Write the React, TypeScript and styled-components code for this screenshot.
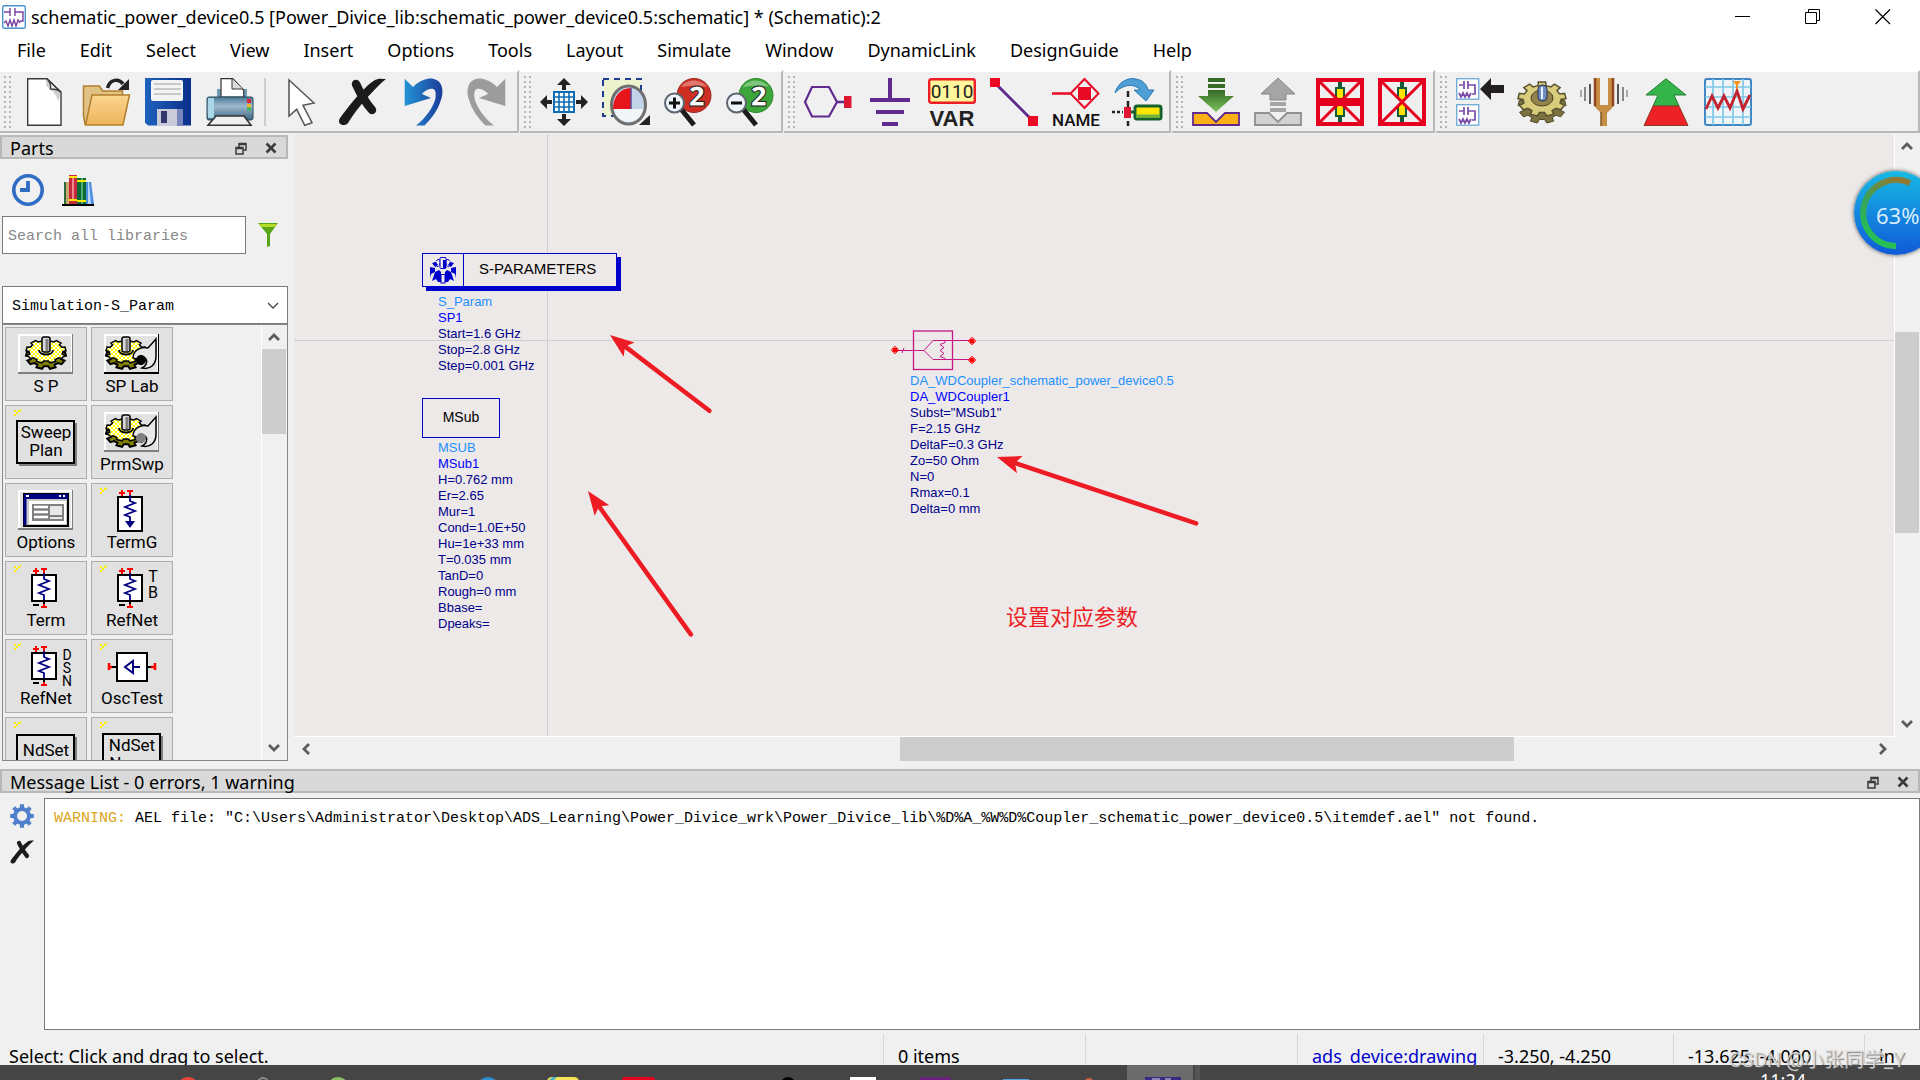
import React from "react";
import styled, { createGlobalStyle } from "styled-components";

const UI = '"Noto Sans", "Open Sans", sans-serif';
const MONO = '"Liberation Mono", monospace';
const ARIAL = '"Liberation Sans", Arial, sans-serif';

const Global = createGlobalStyle`
  * { box-sizing: border-box; }
  body { margin: 0; background: #f0f0f0; color: #000; font-family: ${UI}; font-size: 18px; }
  button { font: inherit; color: inherit; padding: 0; border: 0; background: none; }
  svg { display: block; flex: none; overflow: visible; }
`;

/* ---------- frame ---------- */
const Window = styled.div`
  position: relative;
  display: flex;
  flex-direction: column;
  height: 100vh;
  overflow: hidden;
`;
const TitleBar = styled.header`
  display: flex;
  align-items: center;
  height: 34px;
  padding: 0 2px;
  background: #fff;
`;
const Title = styled.h1`
  flex: 1;
  margin: 0 0 0 5px;
  font-size: 18px;
  font-weight: 400;
  line-height: 34px;
  white-space: nowrap;
`;
const WindowButton = styled.button`
  display: grid;
  place-items: center;
  width: 70px;
  height: 34px;
`;
const MenuBar = styled.nav`
  display: flex;
  height: 36px;
  background: #fff;
`;
const MenuItem = styled.button`
  padding: 0 17px;
  line-height: 32px;
  height: 32px;
`;

/* ---------- tool bars ---------- */
const ToolArea = styled.div`
  display: flex;
  gap: 1px;
  height: 63px;
`;
const ToolGroup = styled.div<{ $grow?: boolean }>`
  display: flex;
  align-items: center;
  flex: ${(p) => (p.$grow ? "1" : "none")};
  border-top: 2px solid #fff;
  border-right: 2px solid #b8b8b8;
  border-bottom: 2px solid #b8b8b8;
`;
const Grip = styled.span`
  width: 13px;
  height: 52px;
  background: radial-gradient(circle at 1px 1px, #b4b4b4 1px, transparent 1px) 4px 0 / 5px 5px;
  background-clip: content-box;
  padding: 0 1px 0 3px;
`;
const ToolButton = styled.button`
  display: grid;
  place-items: center;
  width: 62px;
  height: 56px;
`;
const ToolRule = styled.span`
  width: 2px;
  height: 48px;
  margin: 0 3px;
  background: #cfcfcf;
`;

/* ---------- work area ---------- */
const Work = styled.main`
  display: flex;
  flex: 1;
  min-height: 0;
`;
const Side = styled.aside`
  display: flex;
  flex-direction: column;
  width: 294px;
  padding: 2px 6px 0 0;
`;
const DockTitle = styled.div`
  display: flex;
  align-items: center;
  height: 24px;
  padding: 2px 8px 0;
  border: 2px solid #b8b8b8;
  background: #d9d9d9;
`;
const DockName = styled.h2`
  flex: 1;
  margin: 0;
  font-size: 18px;
  font-weight: 400;
  line-height: 24px;
  white-space: nowrap;
`;
const DockButton = styled.button`
  display: grid;
  place-items: center;
  width: 31px;
  height: 18px;
  &:last-child { width: 14px; margin-left: 8px; }
`;
const SideTools = styled.div`
  display: flex;
  gap: 18px;
  padding: 15px 12px 10px;
`;
const SearchRow = styled.div`
  display: flex;
  align-items: center;
  gap: 12px;
  padding-left: 2px;
  margin-bottom: 32px;
`;
const SearchBox = styled.input`
  width: 244px;
  height: 38px;
  padding: 2px 5px 0;
  border: 1px solid #7a7a7a;
  background: #fff;
  font: 15px ${MONO};
  outline: 0;
  &::placeholder { color: #878787; opacity: 1; }
`;
const ComboWrap = styled.div`
  position: relative;
  margin-left: 2px;
  svg { position: absolute; right: 9px; top: 16px; pointer-events: none; }
`;
const Combo = styled.select`
  appearance: none;
  display: block;
  width: 100%;
  height: 38px;
  padding: 2px 9px 0;
  border: 1px solid #7a7a7a;
  border-radius: 0;
  background: #fff;
  color: #000;
  font: 15px ${MONO};
`;
const Palette = styled.div`
  display: flex;
  flex: 1;
  min-height: 0;
  margin: 0 0 8px 2px;
  border: 1px solid #828790;
`;
const Tiles = styled.div`
  flex: 1;
  display: grid;
  grid-template-columns: 82px 82px;
  grid-auto-rows: 74px;
  gap: 4px;
  padding: 2px;
  overflow: hidden;
`;
const Tile = styled.button`
  display: flex;
  flex-direction: column;
  align-items: center;
  padding-top: 3px;
  border: 1px solid #adadad;
  background: #e1e1e1;
`;
const TileLabel = styled.span`
  font-family: Roboto, sans-serif;
  font-size: 17px;
  line-height: 18px;
`;
const VScroll = styled.div`
  display: flex;
  flex-direction: column;
  width: 26px;
  border-left: 1px solid #fff;
  background: #f0f0f0;
`;
const HScroll = styled.div`
  display: flex;
  height: 26px;
  border-top: 1px solid #fff;
  margin-right: 25px;
`;
const ScrollButton = styled.button`
  display: grid;
  place-items: center;
  flex: none;
  width: 24px;
  height: 24px;
`;
const Gutter = styled.div<{ $size: number }>`
  flex: ${(p) => p.$size};
`;
const Thumb = styled.div<{ $size: number }>`
  flex: ${(p) => p.$size};
  margin: 0 1px 1px 0;
  background: #cdcdcd;
`;
const View = styled.section`
  display: flex;
  flex: 1;
  flex-direction: column;
  min-width: 0;
  padding: 1px 0 7px;
`;
const ViewRow = styled.div`
  display: flex;
  flex: 1;
  min-height: 0;
`;
const Canvas = styled.div`
  position: relative;
  flex: 1;
  overflow: hidden;
  background:
    linear-gradient(#cccfce, #cccfce) 253px 0 / 1px 100% no-repeat,
    linear-gradient(#cccfce, #cccfce) 0 206px / 100% 1px no-repeat,
    #ede9e8;
`;
const Placed = styled.div<{ $x: number; $y: number }>`
  position: absolute;
  left: ${(p) => p.$x}px;
  top: ${(p) => p.$y}px;
`;
const Controller = styled.div`
  display: flex;
  width: 195px;
  height: 34px;
  border: 1px solid #0000cd;
  box-shadow: 4px 4px 0 #0000cd;
  background: #ede9e8;
  font: 15px/30px ${ARIAL};
`;
const ControllerIcon = styled.span`
  display: grid;
  place-items: center;
  width: 41px;
  border-right: 1px solid #0000cd;
`;
const ControllerName = styled.span`
  padding-left: 15px;
`;
const Substrate = styled.div`
  width: 78px;
  height: 40px;
  border: 1px solid #0000cd;
  font: 14px/36px ${ARIAL};
  text-align: center;
`;
const Params = styled.ul`
  margin: 0;
  padding: 0;
  list-style: none;
  font: 13px/16px ${ARIAL};
  color: #00008b;
  white-space: nowrap;
`;
const Param = styled.li<{ $tone?: string }>`
  color: ${(p) => p.$tone ?? "inherit"};
`;
const Remark = styled.p`
  margin: 0;
  color: #ed1c24;
  font: 22px/32px "Open Sans", "Noto Sans CJK SC", sans-serif;
  white-space: nowrap;
`;
const Marks = styled.svg`
  position: absolute;
  left: 0;
  top: 0;
  pointer-events: none;
`;

/* ---------- messages and status ---------- */
const Messages = styled.section`
  display: flex;
  flex-direction: column;
`;
const MessageRow = styled.div`
  display: flex;
  padding-top: 5px;
`;
const MessageTools = styled.div`
  display: flex;
  flex-direction: column;
  gap: 12px;
  width: 44px;
  padding: 6px 10px;
`;
const Log = styled.div`
  flex: 1;
  height: 232px;
  padding: 10px 9px;
  border: 1px solid #7a7a7a;
  background: #fff;
  font: 15px/20px ${MONO};
  white-space: pre;
`;
const Warn = styled.span`
  color: #daa520;
`;
const StatusBar = styled.footer`
  display: flex;
  align-items: flex-start;
  height: 35px;
  padding-top: 4px;
  overflow: hidden;
`;
const Cell = styled.span<{ $w?: number; $tone?: string }>`
  flex: ${(p) => (p.$w ? `0 0 ${p.$w}px` : "1")};
  height: 30px;
  padding: 9px 0 0 14px;
  line-height: 26px;
  color: ${(p) => p.$tone ?? "#000"};
  border-left: 1px solid #d7d7d7;
  white-space: nowrap;
  &:first-child { border: 0; padding-left: 9px; }
`;
const TaskBar = styled.div`
  position: relative;
  height: 15px;
  background: #454545;
  overflow: hidden;
`;
const Clock = styled.time`
  position: absolute;
  right: 114px;
  top: 5px;
  color: #fff;
  font-size: 18px;
  line-height: 20px;
`;
const Watermark = styled.span`
  position: absolute;
  right: 15px;
  bottom: 7px;
  color: rgba(225, 225, 225, 0.85);
  text-shadow: 1px 1px 1px rgba(90, 90, 90, 0.75);
  font: 20px/26px Roboto, "Noto Sans CJK SC", sans-serif;
`;
const Meter = styled.div`
  position: absolute;
  right: -18px;
  top: 171px;
  width: 84px;
  height: 84px;
  padding-left: 22px;
  border-radius: 50%;
  background: linear-gradient(#18b9e4, #1059d8);
  box-shadow: 0 0 4px rgba(0, 0, 0, 0.7);
  color: #d7ecff;
  font-size: 22px;
  line-height: 88px;
  svg { position: absolute; inset: 0; }
`;

/* ---------- icons ---------- */
const gearPath = (cx: number, cy: number, ro: number, ri: number, teeth: number, sy = 1) => {
  const pts: string[] = [];
  for (let i = 0; i < teeth; i++) {
    [[-0.3, ri], [-0.22, ro], [0.22, ro], [0.3, ri]].forEach(([o, r]) => {
      const a = ((i + o) / teeth) * Math.PI * 2 - Math.PI / 2;
      pts.push(`${(cx + Math.cos(a) * r).toFixed(1)} ${(cy + Math.sin(a) * r * sy).toFixed(1)}`);
    });
  }
  return `M${pts.join("L")}Z`;
};

const Svg48 = ({ children }: { children: React.ReactNode }) => (
  <svg width="48" height="48" viewBox="0 0 48 48" fill="none" aria-hidden="true">{children}</svg>
);
const Swirl = ({ fill }: { fill: string }) => (
  <path fill={fill} d="M4.7.7 13 9C20 2 28 0 33 .7c9 1.3 11 11.3 8.5 19.500C38 33 30 42 24.500 47.500H16C26 40 34 28 35.500 20c1-8-1.500-10-5.500-9-4 1-6 2.500-8 5l9 4L4.700 28z" />
);
const Cross = () => (
  <>
    <path d="M2 40C9 31 25 9 37 2c4-2 8-1 11-1C37 10 19 30 10 45c-3 4-12 2-8-5z" fill="#1c1a1b" />
    <path d="M18 6c4 9 9 18 16 26" stroke="#1c1a1b" strokeWidth="8.500" strokeLinecap="round" />
  </>
);
const Disabled = ({ bar }: { bar?: boolean }) => (
  <>
    <rect x="2" y="2" width="44" height="44" fill="#efefef" stroke="#e6001f" strokeWidth="4" />
    <path d="M24 4v40" stroke="#155a38" strokeWidth="4" />
    <path d="M20 10h8v10l-4 4 4 4v10h-8V28l4-4-4-4z" fill="#ffe500" stroke="#155a38" strokeWidth="2" />
    <path d="M4 4l40 40M44 4L4 44" stroke="#e6001f" strokeWidth="3" />
    {bar && <path d="M2 24h44" stroke="#e6001f" strokeWidth="8" />}
  </>
);
const Lens = ({ ball, edge, minus }: { ball: string; edge: string; minus?: boolean }) => (
  <>
    <circle cx="30" cy="17.500" r="17" fill={ball} stroke={edge} />
    <path d="M17 9c5-8 19-9 26 0-8-2-17-2-26 0z" fill="#fff" opacity=".35" />
    <path d="M17 31L30 47" stroke="#1b1b1b" strokeWidth="5" />
    <circle cx="10.500" cy="25" r="9.500" fill="#eef4fa" stroke="#5d6670" strokeWidth="2" />
    <path d={minus ? "M5 25h11" : "M5 25h11M10.500 19.500v11"} stroke="#111" strokeWidth="3" />
    <text x="33" y="28" fontFamily="Open Sans" fontWeight="800" fontSize="28" fill="#fff" stroke="#222" strokeWidth="1" textAnchor="middle">2</text>
  </>
);
const MiniSchematic = ({ y }: { y: number }) => (
  <g transform={`translate(0 ${y})`}>
    <rect x=".7" y=".7" width="22" height="20.500" fill="#fff" stroke="#75aedb" strokeWidth="1.400" />
    <path d="M3 7h4M8 3v8M12 3v8M12 7h7v9h-3M3 15l2 4 2-4 2 4 2-4 2 4 2-4" stroke="#7a4aa8" strokeWidth="1.700" />
  </g>
);

const ICONS: Record<string, React.ReactNode> = {
  New: (
    <>
      <path d="M7.700.7H27L41 14v33.300H7.700z" fill="#fff" stroke="#3a3a3a" strokeWidth="1.400" />
      <path d="M26 1l15 14-3 9C37 17 33 13 26 8z" fill="#999" opacity=".45" />
      <path d="M27 .7c3 3 4 7 3.500 10.300 4 0 8 .5 10.500 3.500z" fill="#f2f2f2" stroke="#3a3a3a" strokeWidth="1.400" />
    </>
  ),
  Open: (
    <>
      <path d="M1.500 38V8h16l3 5h20v6L8 46H3z" fill="#e0c285" stroke="#b07f2d" strokeWidth="1.500" />
      <path d="M10 17h37.500L41 47H3.500z" fill="url(#folder)" stroke="#b07f2d" strokeWidth="1.500" />
      <path d="M25.500 10C28 1 37 0 41 6" stroke="#222" strokeWidth="3.500" />
      <path d="M47 1v11H36z" fill="#222" />
    </>
  ),
  Save: (
    <>
      <path d="M1 0h46v47.500H4l-3-3z" fill="url(#floppy)" />
      <rect x="7" y="2" width="32" height="21" rx="2" fill="#f3f3f3" />
      <path d="M10 6h27M10 11h27M10 16h27" stroke="#bbb" strokeWidth="1.300" />
      <path d="M13 31h26v17H13z" fill="#c9ccd8" />
      <path d="M17 33h6v12h-6z" fill="#34386f" />
      <path d="M33 31h6v17h-6z" fill="#7986bd" />
    </>
  ),
  Print: (
    <>
      <path d="M11 20v-9h30v9" fill="#6f9bb4" />
      <path d="M15 19V.7h11.700L37.700 12v7z" fill="#fff" stroke="#333" strokeWidth="1.200" />
      <path d="M26 1v10h11" stroke="#333" fill="#ddd" />
      <rect x="1" y="19" width="46" height="23" rx="2" fill="url(#printer)" stroke="#234a5d" />
      <rect x="2" y="20" width="6" height="20" fill="#a8d7e8" />
      <path d="M41 23h4" stroke="#e2213c" strokeWidth="4" />
      <path d="M41 27.500h4" stroke="#f0b429" strokeWidth="3" />
      <path d="M41 31h4" stroke="#3ab54a" strokeWidth="3" />
      <path d="M10 38h28l7 9.300H2z" fill="#eee" stroke="#333" strokeWidth="1.600" />
    </>
  ),
  Pointer: <path d="M13 2l25 23-11 2.300 9 17.400-7.300 2.600-8-16L13 38z" fill="#fff" stroke="#5a5a5a" strokeWidth="1.600" />,
  Delete: <Cross />,
  Undo: <Swirl fill="url(#undo)" />,
  Redo: <g transform="translate(48 0) scale(-1 1)"><Swirl fill="#9c9c9c" /></g>,
  Pan: (
    <>
      <rect x="14" y="14" width="20" height="20" fill="#fff" stroke="#0d6cb5" strokeWidth="2" />
      <path d="M19 14v20M24 14v20M29 14v20M14 19h20M14 24h20M14 29h20" stroke="#0d6cb5" strokeWidth="1.600" />
      <path d="M24 0l7 7H17zM24 48l7-7H17zM0 24l7-7v14zM48 24l-7-7v14z" fill="#222" />
      <path d="M24 6v6M24 42v-6M6 24h6M42 24h-6" stroke="#222" strokeWidth="4" />
    </>
  ),
  "Zoom area": (
    <>
      <rect x="1" y="1" width="38" height="37" fill="#eef3cf" stroke="#1f3b8f" strokeWidth="2" strokeDasharray="6 5" />
      <ellipse cx="26.500" cy="27" rx="17" ry="19" fill="#c3d4e8" stroke="#6f6f6f" strokeWidth="3" />
      <path d="M11 31C11 19 18 10 29 10v21z" fill="#e8141c" />
      <path d="M29 10v21" stroke="#5b4a9a" strokeWidth="1.500" />
      <path d="M12 31h29c-1 8-8 13-14.500 13S13 39 12 31z" fill="#f2f5f8" />
      <path d="M48 37v10H37z" fill="#222" />
    </>
  ),
  "Zoom in": <Lens ball="#cf2e22" edge="#9d2a22" />,
  "Zoom out": <Lens ball="#3da63a" edge="#2c8a2c" minus />,
  Port: (
    <>
      <path d="M8 9h17l8 15-8 14.500H8L1 24z" stroke="#612a8e" strokeWidth="2.200" />
      <path d="M33 24h8" stroke="#612a8e" strokeWidth="2.500" />
      <rect x="40" y="18" width="7.500" height="12" fill="#dd1733" />
    </>
  ),
  Ground: <path d="M24 0v22M4 22h40M10 34h28M16 46h16" stroke="#612a8e" strokeWidth="4" />,
  Variable: (
    <>
      <rect x="1.200" y="1.200" width="45.600" height="23.600" rx="2" fill="#fff79a" stroke="#ee1c25" strokeWidth="2.400" />
      <text x="24" y="20" fontFamily="Roboto" fontSize="19" fill="#222" textAnchor="middle">0110</text>
      <text x="24" y="47.500" fontFamily="Liberation Sans" fontWeight="700" fontSize="22" fill="#222" textAnchor="middle">VAR</text>
    </>
  ),
  Wire: (
    <>
      <path d="M5 5l38 38" stroke="#612a8e" strokeWidth="3" />
      <path d="M0 0h10v9H0zM38 38h10v10H38z" fill="#ea0a25" />
    </>
  ),
  "Wire name": (
    <>
      <path d="M0 15.500h18" stroke="#ea0a25" strokeWidth="2.500" />
      <path d="M32.500 1l14 14.500-14 14.500-14-14.500z" stroke="#ea0a25" strokeWidth="2" fill="#efefef" />
      <path d="M26 9h13v13H26z" fill="#ea0a25" />
      <text x="24" y="47.500" fontFamily="Roboto" fontWeight="500" fontSize="17" fill="#111" textAnchor="middle">NAME</text>
    </>
  ),
  "Break connections": (
    <>
      <path d="M1 15C4 4 14-1 22 1c7 1 11 6 12 11h6L32 23 20 12h6C22 6 10 5 1 15z" fill="#4d9fd6" stroke="#2c78b3" />
      <path d="M14 13v35" stroke="#222" strokeWidth="2.500" strokeDasharray="6 4" />
      <path d="M-2 34h11" stroke="#222" strokeWidth="2.500" strokeDasharray="3 2" />
      <rect x="10" y="29" width="7" height="11" fill="#dd1733" />
      <rect x="21" y="28" width="26" height="13" rx="2" fill="#ffe500" stroke="#15602f" strokeWidth="3" />
      <path d="M22 38h24" stroke="#6db33f" strokeWidth="3" />
      <path d="M17 34h4" stroke="#15602f" strokeWidth="3" />
    </>
  ),
  "Push into": (
    <>
      <path d="M16 0h17v4H16zM16 6h17v4H16z" fill="#336a24" />
      <path d="M16 12h17v6h9L24 34 6 18h10z" fill="url(#push)" />
      <path d="M1 35h14l9 9 9-9h14v12H1z" fill="#fbb016" stroke="#612a8e" strokeWidth="1.800" />
    </>
  ),
  "Pop out": (
    <>
      <path d="M24 0l17 16h-9v6H16v-6H7z" fill="#a5a5a5" stroke="#858585" />
      <path d="M16 24h16v4H16zM16 30h16v4H16z" fill="#a5a5a5" />
      <path d="M1 35h14l9 9 9-9h14v12H1z" fill="#d2d2d2" stroke="#909090" strokeWidth="1.800" />
    </>
  ),
  Deactivate: <Disabled bar />,
  "Deactivate and short": <Disabled />,
  "Copy schematic": (
    <>
      <MiniSchematic y={0} />
      <MiniSchematic y={26} />
      <path d="M24 11L35 0v7h13v8H35v7z" fill="#231f20" />
    </>
  ),
  Simulate: (
    <>
      <path d={gearPath(24, 28, 24, 19, 9, 0.72)} fill="#7d7340" stroke="#4c4728" />
      <path d={gearPath(24, 21, 24, 19, 9, 0.72)} fill="#d9cc7c" stroke="#5a5330" strokeWidth="1.500" />
      <ellipse cx="24" cy="20" rx="11" ry="8" fill="#93834a" stroke="#4c4728" />
      <rect x="20" y="7" width="9" height="16" rx="4" fill="#6f8dc0" stroke="#2b344c" />
      <path d="M24 9v12" stroke="#e9f0ff" strokeWidth="2" />
    </>
  ),
  Tune: (
    <>
      <path d="M14 0h6v27h8V0h6v28l-7 7v13h-6V35l-7-7z" fill="#c58d45" />
      <path d="M15 0v28M33 0v28" stroke="#93441c" strokeWidth="2.500" />
      <path d="M21 34v14" stroke="#7c5a20" strokeWidth="1.500" />
      <path d="M10 6v20M38 6v20" stroke="#555" strokeWidth="2" />
      <path d="M5 9v14M43 9v14" stroke="#888" strokeWidth="2" />
      <path d="M1 12v7M47 12v7" stroke="#aaa" strokeWidth="2" />
    </>
  ),
  Optimize: (
    <>
      <path d="M24 .7L44 17H32l5 11H11l5-11H4z" fill="#35b44a" stroke="#257d35" />
      <path d="M11 28h26l9 19.500H2z" fill="#ec2227" stroke="#8e3a22" />
    </>
  ),
  "Data display": (
    <>
      <rect x="1" y="1" width="46" height="46" rx="2" fill="#eef4f8" stroke="#3f86c2" strokeWidth="2" />
      <path d="M9 1v46M19 1v46M29 1v46M39 1v46M1 9h46M1 19h46M1 29h46M1 39h46" stroke="#7cc6e6" strokeWidth="1.600" />
      <path d="M2 31l6-13 6 12 6-12 6 12 7-17 6 18 7-14" stroke="#c3232e" strokeWidth="2.800" />
      <path d="M29 3h8l-3 4v4h-2V7z" fill="#f7941d" />
    </>
  ),
};

const Defs = () => (
  <svg width="0" height="0" style={{ position: "absolute" }} aria-hidden="true">
    <defs>
      <linearGradient id="folder" x2="0" y2="1"><stop stopColor="#f9d690" /><stop offset="1" stopColor="#efb35b" /></linearGradient>
      <linearGradient id="floppy"><stop stopColor="#1d62bd" /><stop offset="1" stopColor="#0b2f8a" /></linearGradient>
      <linearGradient id="printer" x2="0" y2="1"><stop stopColor="#4d7896" /><stop offset=".4" stopColor="#9db8cc" /><stop offset="1" stopColor="#3c6684" /></linearGradient>
      <linearGradient id="undo"><stop stopColor="#2394d6" /><stop offset="1" stopColor="#1b3c9a" /></linearGradient>
      <linearGradient id="push" x2="0" y2="1"><stop stopColor="#336a24" /><stop offset="1" stopColor="#7cc35c" /></linearGradient>
      <linearGradient id="meter" x1=".7" x2=".3" y2="1"><stop stopColor="#8e7a33" /><stop offset=".5" stopColor="#35a65a" /><stop offset="1" stopColor="#24c454" /></linearGradient>
      <pattern id="dither" width="4" height="4" patternUnits="userSpaceOnUse">
        <path d="M0 0h4v4H0z" fill="#ffff00" />
        <path d="M0 0h2v2H0zM2 2h2v2H2z" fill="#fff" />
      </pattern>
    </defs>
  </svg>
);

const Chevron = ({ dir }: { dir: "up" | "down" | "left" | "right" }) => {
  const turn = { up: 0, right: 90, down: 180, left: 270 }[dir];
  return (
    <svg width="12" height="12" viewBox="0 0 12 12" aria-hidden="true">
      <path d="M1 9l5-5 5 5" fill="none" stroke="#5c5c5c" strokeWidth="2.800" transform={`rotate(${turn} 6 6)`} />
    </svg>
  );
};
const FloatIcon = () => (
  <svg width="12" height="13" viewBox="0 0 12 13" fill="none" stroke="#3a3a3a" strokeWidth="1.500" aria-hidden="true">
    <path d="M4 5V1.500h7V8H8.500M4 2.500h7" />
    <path d="M1 5.500h7v6.500H1zM1 6.500h7" />
  </svg>
);
const CloseIcon = () => (
  <svg width="12" height="12" viewBox="0 0 12 12" aria-hidden="true">
    <path d="M1.500 1.500l9 9M10.500 1.500l-9 9" stroke="#3a3a3a" strokeWidth="2.600" />
  </svg>
);

/* ---------- palette symbols ---------- */
const Spark = () => (
  <path d="M5 1h2v2H5zM9 1h2v2H9zM7 3h2v2H7zM5 5h2v2H5zM11 0h1v2h-1z" fill="#ffee00" />
);
const Bevel = ({ edge = "#808080" }: { edge?: string }) => (
  <>
    <path d="M9 3h55v40H9z" fill={edge} />
    <path d="M9 3h54v38H9z" fill="#fff" />
    <path d="M11 5h51v36H11z" fill="#e1e1e1" />
  </>
);
const GearTile = ({ wrench, hook = "#000" }: { wrench?: boolean; hook?: string }) => {
  const cx = wrench ? 31 : 37;
  return (
    <>
      <path d={gearPath(cx, 25, 20, 16, 9, 0.65)} fill="#808000" stroke="#000" strokeWidth="2" />
      <path d={gearPath(cx, 20, 20, 17, 9, 0.6)} fill="url(#dither)" stroke="#000" strokeWidth="1.500" />
      <path d={`M${cx - 7} 19c0 6 14 6 14 0`} fill="none" stroke="#000" strokeWidth="2" />
      <rect x={cx - 4} y="6" width="8" height="15" rx="2" fill="#d8d8d8" stroke="#000" strokeWidth="1.500" />
      <path d={`M${cx + 1} 8v12`} stroke="#808080" strokeWidth="3" />
      {wrench && (
        <>
          <path d="M61 8l-8 9c-8-2-15 3-15 10l4 1c2-3 7-3 9 0s0 7-4 9c9 2 14-4 14-12z" fill="#e8e8e8" stroke="#000" strokeWidth="1.500" />
          <circle cx="46" cy="29" r="5" fill={hook} />
        </>
      )}
    </>
  );
};
const Resistor = ({ x, ground }: { x: number; ground?: boolean }) => (
  <g transform={`translate(${x} 0)`} fill="none">
    <path d="M-8 3v6M-11 6h6" stroke="#f00" strokeWidth="2" />
    <path d="M-3 4h6M0 4v4" stroke="#f00" strokeWidth="2" />
    <rect x="-12" y="10" width="24" height={ground ? 34 : 26} fill="#fff" stroke="#000" strokeWidth="2" />
    <path d="M0 8v6l5 2-10 4 10 4-10 4 5 2v5" stroke="#000080" strokeWidth="1.800" />
    {ground ? (
      <path d="M-5 34h10l-5 7z" fill="#000080" />
    ) : (
      <>
        <path d="M0 37v4M-11 40h6" stroke="#000" strokeWidth="2" />
        <path d="M-3 42h6M0 39v3" stroke="#f00" strokeWidth="2" />
      </>
    )}
  </g>
);
const SideLetters = ({ x, letters, size, step }: { x: number; letters: string; size: number; step: number }) => (
  <g fontFamily="Roboto" fontSize={size} fill="#000" textAnchor="middle">
    {letters.split("").map((c, i) => <text key={c} x={x} y={17 + i * step}>{c}</text>)}
  </g>
);
const BoxedWords = ({ lines, top }: { lines: string[]; top: number }) => (
  <>
    <path d={`M10 ${top + 2}h58v43H10z`} fill="#808080" />
    <rect x="8" y={top} width="57" height="42" fill="#e1e1e1" stroke="#000" strokeWidth="2" />
    <g fontFamily="Roboto" fontSize="17" fill="#000" textAnchor="middle">
      {lines.map((l, i) => <text key={l} x="37" y={top + (lines.length === 1 ? 21 : 17) + i * 18}>{l}</text>)}
    </g>
  </>
);

type Part = { id: string; label?: string; art: React.ReactNode };
const PARTS: Part[] = [
  { id: "sp", label: "S P", art: <><Bevel /><GearTile /></> },
  { id: "splab", label: "SP Lab", art: <><Bevel edge="#000" /><GearTile wrench /></> },
  { id: "sweep", art: <><Spark /><BoxedWords lines={["Sweep", "Plan"]} top={12} /></> },
  { id: "prm", label: "PrmSwp", art: <><Bevel /><GearTile wrench hook="#808080" /></> },
  {
    id: "options",
    label: "Options",
    art: (
      <>
        <Bevel />
        <path d="M15 7h44v32H15z" fill="#c8c8c8" stroke="#000" strokeWidth="2" />
        <path d="M15 7h44v5H15z" fill="#000080" />
        <path d="M16 12v26" stroke="#000080" strokeWidth="3" />
        <path d="M17 9h3M50 9h2M54 9h2" stroke="#fff" strokeWidth="2" />
        <path d="M20 14h37v23H20z" fill="#fff" />
        <path d="M23 17h32v17H23z" fill="#808080" />
        <path d="M25 20h14M25 25h14M25 30h14" stroke="#fff" strokeWidth="2.500" />
        <path d="M41 19h12v9H41zM41 30h12v2H41z" fill="#e8e8e8" />
      </>
    ),
  },
  { id: "termg", label: "TermG", art: <><Spark /><Resistor x={35} ground /></> },
  { id: "term", label: "Term", art: <><Spark /><Resistor x={35} /></> },
  { id: "refnet-tb", label: "RefNet", art: <><Spark /><Resistor x={35} /><SideLetters x={58} letters="TB" size={16} step={16} /></> },
  { id: "refnet-dsn", label: "RefNet", art: <><Spark /><Resistor x={35} /><SideLetters x={58} letters="DSN" size={14} step={13} /></> },
  {
    id: "osc",
    label: "OscTest",
    art: (
      <>
        <Spark />
        <path d="M14 24h7M52 24h7" stroke="#000" strokeWidth="2" />
        <path d="M14 20v7M60 20v7M14 24h3M56 24h4" stroke="#f00" strokeWidth="2.500" />
        <rect x="22" y="10" width="30" height="28" fill="#fff" stroke="#000" strokeWidth="2" />
        <path d="M38 18v12l-8-6zM37 24h8" fill="none" stroke="#000080" strokeWidth="2" />
      </>
    ),
  },
  { id: "ndset", art: <><Spark /><BoxedWords lines={["NdSet"]} top={14} /></> },
  { id: "ndsetname", art: <><Spark /><BoxedWords lines={["NdSet", "Name"]} top={13} /></> },
];

const TOOL_GROUPS: string[][] = [
  ["New", "Open", "Save", "Print", "|", "Pointer", "Delete", "Undo", "Redo"],
  ["Pan", "Zoom area", "Zoom in", "Zoom out"],
  ["Port", "Ground", "Variable", "Wire", "Wire name", "Break connections"],
  ["Push into", "Pop out", "Deactivate", "Deactivate and short"],
  ["Copy schematic", "Simulate", "Tune", "Optimize", "Data display"],
];
const MENUS = ["File", "Edit", "Select", "View", "Insert", "Options", "Tools", "Layout", "Simulate", "Window", "DynamicLink", "DesignGuide", "Help"];

const LIGHT = "#1e90ff";
const BLUE = "#0000ff";
const ParamList = ({ lines }: { lines: string[] }) => (
  <Params>
    {lines.map((l, i) => <Param key={l} $tone={i === 0 ? LIGHT : i === 1 ? BLUE : undefined}>{l}</Param>)}
  </Params>
);

const Arrow = ({ from, to }: { from: [number, number]; to: [number, number] }) => {
  const dx = from[0] - to[0];
  const dy = from[1] - to[1];
  const angle = (Math.atan2(dy, dx) * 180) / Math.PI;
  return (
    <g transform={`translate(${to[0]} ${to[1]}) rotate(${angle})`}>
      <path d="M0 0L24-9 19 0 24 9z" fill="#ed1c24" />
      <path d={`M18 0H${Math.hypot(dx, dy) - 2}`} stroke="#ed1c24" strokeWidth="4.500" strokeLinecap="round" />
    </g>
  );
};

const DockButtons = () => (
  <>
    <DockButton aria-label="Float"><FloatIcon /></DockButton>
    <DockButton aria-label="Close"><CloseIcon /></DockButton>
  </>
);

export default function App() {
  return (
    <Window>
      <Global />
      <Defs />
      <TitleBar>
        <svg width="24" height="24" viewBox="0 0 24 24" fill="none" aria-hidden="true">
          <rect x=".7" y=".7" width="22.600" height="22.600" rx="1.500" fill="#fff" stroke="#4b93cf" strokeWidth="1.400" />
          <path d="M2 7h6M8 3v8M13 3v8M13 7h8v9h-3M2 18l2-2 2 5 2-6 2 6 2-6 2 6 2-6 2 3" stroke="#7a3fa0" strokeWidth="1.400" />
        </svg>
        <Title>schematic_power_device0.5 [Power_Divice_lib:schematic_power_device0.5:schematic] * (Schematic):2</Title>
        <WindowButton aria-label="Minimize">
          <svg width="16" height="16" viewBox="0 0 16 16"><path d="M0 7.500h15" stroke="#000" /></svg>
        </WindowButton>
        <WindowButton aria-label="Restore">
          <svg width="16" height="16" viewBox="0 0 16 16" fill="none" stroke="#000"><path d="M.5 3.500h11v11H.5zM3.500 3V.5h11v11H12" /></svg>
        </WindowButton>
        <WindowButton aria-label="Close window">
          <svg width="16" height="16" viewBox="0 0 16 16"><path d="M.5.5l14.500 14.500M15 .5L.5 15" stroke="#000" strokeWidth="1.200" /></svg>
        </WindowButton>
      </TitleBar>
      <MenuBar>{MENUS.map((m) => <MenuItem key={m}>{m}</MenuItem>)}</MenuBar>

      <ToolArea>
        {TOOL_GROUPS.map((group, i) => (
          <ToolGroup key={i} $grow={i === TOOL_GROUPS.length - 1}>
            <Grip />
            {group.map((name) =>
              name === "|" ? <ToolRule key={name} /> : (
                <ToolButton key={name} aria-label={name}><Svg48>{ICONS[name]}</Svg48></ToolButton>
              )
            )}
          </ToolGroup>
        ))}
      </ToolArea>

      <Work>
        <Side>
          <DockTitle><DockName>Parts</DockName><DockButtons /></DockTitle>
          <SideTools>
            <button aria-label="Recent parts">
              <svg width="32" height="32" viewBox="0 0 32 32" fill="none" stroke="#2f6cc4">
                <circle cx="16" cy="16" r="14.200" strokeWidth="3.600" />
                <path d="M16 7v9H8" strokeWidth="3.800" />
              </svg>
            </button>
            <button aria-label="Libraries">
              <svg width="32" height="32" viewBox="0 0 32 32">
                <path d="M2 8h2v22H2z" fill="#2e6b3a" /><path d="M4 8h3v22H4z" fill="#c9a970" />
                <path d="M7 1h8v29H7z" fill="#c62a3c" /><path d="M10 4h2v22h-2z" fill="#f08a8a" />
                <path d="M15 4h9v26h-9z" fill="#0c6b35" /><path d="M19 4h2v26h-2z" fill="#4fb06c" />
                <path d="M7 3h8M7 26h8M15 7h9M15 27h9" stroke="#ffe800" strokeWidth="2" />
                <path d="M24 8h5l3 22h-8z" fill="#4c8fe0" /><path d="M26 8h1l2 22h-3z" fill="#b9d6fa" />
                <path d="M0 31h32" stroke="#000" strokeWidth="2" />
              </svg>
            </button>
          </SideTools>
          <SearchRow>
            <SearchBox aria-label="Search all libraries" placeholder="Search all libraries" />
            <button aria-label="Filter">
              <svg width="20" height="26" viewBox="0 0 20 26">
                <path d="M0 1h20l-8 11v12l-3 1V12z" fill="#58a618" />
                <path d="M1 2h18l-2 3H3z" fill="#b6dc2a" />
              </svg>
            </button>
          </SearchRow>
          <ComboWrap>
            <Combo aria-label="Palette"><option>Simulation-S_Param</option></Combo>
            <svg width="12" height="8" viewBox="0 0 12 8" fill="none"><path d="M1 1l5 5 5-5" stroke="#444" strokeWidth="1.300" /></svg>
          </ComboWrap>
          <Palette>
            <Tiles>
              {PARTS.map((p) => (
                <Tile key={p.id} aria-label={p.label ?? p.id}>
                  <svg width="74" height={p.label ? 46 : 68} viewBox={`0 0 74 ${p.label ? 46 : 68}`} aria-hidden="true">{p.art}</svg>
                  {p.label && <TileLabel>{p.label}</TileLabel>}
                </Tile>
              ))}
            </Tiles>
            <VScroll>
              <ScrollButton aria-label="Up"><Chevron dir="up" /></ScrollButton>
              <Thumb $size={84} />
              <Gutter $size={298} />
              <ScrollButton aria-label="Down"><Chevron dir="down" /></ScrollButton>
            </VScroll>
          </Palette>
        </Side>

        <View>
          <ViewRow>
            <Canvas>
              <Placed $x={128} $y={119}>
                <Controller>
                  <ControllerIcon>
                    <svg width="28" height="28" viewBox="0 0 28 28" fill="#0000cd" aria-hidden="true">
                      <path d="M5 8l3-4 3-1v5l-2 3zM23 8l-3-4-3-1v5l2 3z" fill="none" stroke="#0000cd" strokeDasharray="3 1" />
                      <path d="M3 7l4-1 2 3-3 2zM25 7l-4-1-2 3 3 2z" />
                      <path d="M1 11l5 1v4l-4 2-1 4zM27 11l-5 1v4l4 2 1 4z" />
                      <path d="M6 16l4-2 2 2v10H9l-2-3-4 2zM22 16l-4-2-2 2v10h3l2-3 4 2z" />
                      <rect x="11" y="1.500" width="6" height="11" rx="1" fill="#ede9e8" stroke="#0000cd" />
                      <path d="M14 4h3v8h-3z" />
                      <rect x="12" y="18.500" width="4" height="8.500" fill="#ede9e8" stroke="#0000cd" />
                    </svg>
                  </ControllerIcon>
                  <ControllerName>S-PARAMETERS</ControllerName>
                </Controller>
              </Placed>
              <Placed $x={144} $y={160}>
                <ParamList lines={["S_Param", "SP1", "Start=1.6 GHz", "Stop=2.8 GHz", "Step=0.001 GHz"]} />
              </Placed>
              <Placed $x={128} $y={264}><Substrate>MSub</Substrate></Placed>
              <Placed $x={144} $y={306}>
                <ParamList lines={["MSUB", "MSub1", "H=0.762 mm", "Er=2.65", "Mur=1", "Cond=1.0E+50", "Hu=1e+33 mm", "T=0.035 mm", "TanD=0", "Rough=0 mm", "Bbase=", "Dpeaks="]} />
              </Placed>
              <Placed $x={586} $y={186}>
                <svg width="100" height="54" viewBox="0 0 100 54" fill="none" stroke="#c71585" aria-hidden="true">
                  <rect x="33.500" y="11" width="39" height="38.500" strokeWidth="1.300" />
                  <path d="M15 30.500h29l9-10h39M44 30.500l9 9h39M22 33l2-5" />
                  <path d="M65 20.500v2l-5 2 4 3-4 3 4 3-4 3 5 2v1" />
                  <g fill="#f00" stroke="none"><circle cx="15" cy="30" r="2.600" /><circle cx="92" cy="21" r="2.600" /><circle cx="92" cy="40" r="2.600" /></g>
                  <path d="M15 26l4 4-4 4-4-4zM92 17l4 4-4 4-4-4zM92 36l4 4-4 4-4-4z" stroke="#f00" strokeWidth=".7" />
                </svg>
              </Placed>
              <Placed $x={616} $y={239}>
                <ParamList lines={["DA_WDCoupler_schematic_power_device0.5", "DA_WDCoupler1", 'Subst="MSub1"', "F=2.15 GHz", "DeltaF=0.3 GHz", "Zo=50 Ohm", "N=0", "Rmax=0.1", "Delta=0 mm"]} />
              </Placed>
              <Placed $x={712} $y={466}><Remark>设置对应参数</Remark></Placed>
              <Marks width="920" height="520" viewBox="0 0 920 520" fill="none" aria-hidden="true">
                <Arrow from={[417, 278]} to={[316, 201]} />
                <Arrow from={[398, 502]} to={[294, 357]} />
                <Arrow from={[904, 390]} to={[703, 323]} />
              </Marks>
            </Canvas>
            <VScroll>
              <ScrollButton aria-label="Scroll up"><Chevron dir="up" /></ScrollButton>
              <Gutter $size={174} />
              <Thumb $size={202} />
              <Gutter $size={178} />
              <ScrollButton aria-label="Scroll down"><Chevron dir="down" /></ScrollButton>
            </VScroll>
          </ViewRow>
          <HScroll>
            <ScrollButton aria-label="Scroll left"><Chevron dir="left" /></ScrollButton>
            <Gutter $size={582} />
            <Thumb $size={614} />
            <Gutter $size={356} />
            <ScrollButton aria-label="Scroll right"><Chevron dir="right" /></ScrollButton>
          </HScroll>
        </View>
      </Work>

      <Messages>
        <DockTitle><DockName>Message List - 0 errors, 1 warning</DockName><DockButtons /></DockTitle>
        <MessageRow>
          <MessageTools>
            <button aria-label="Message settings">
              <svg width="24" height="24" viewBox="0 0 24 24">
                <path d={gearPath(12, 12, 12, 8.500, 8)} fill="#4f7fcb" />
                <circle cx="12" cy="12" r="7" fill="none" stroke="#4f7fcb" strokeWidth="4" />
                <circle cx="12" cy="12" r="5" fill="#f0f0f0" />
              </svg>
            </button>
            <button aria-label="Clear messages">
              <svg width="24" height="24" viewBox="0 0 48 48" fill="none"><Cross /></svg>
            </button>
          </MessageTools>
          <Log><Warn>WARNING:</Warn>{' AEL file: "C:\\Users\\Administrator\\Desktop\\ADS_Learning\\Power_Divice_wrk\\Power_Divice_lib\\%D%A_%W%D%Coupler_schematic_power_device0.5\\itemdef.ael" not found.'}</Log>
        </MessageRow>
      </Messages>

      <StatusBar>
        <Cell>Select: Click and drag to select.</Cell>
        <Cell $w={202}>0 items</Cell>
        <Cell $w={212} />
        <Cell $w={186} $tone="#0000c8">ads_device:drawing</Cell>
        <Cell $w={190}>-3.250, -4.250</Cell>
        <Cell $w={191}>-13.625, -4.000</Cell>
        <Cell $w={56}>in</Cell>
      </StatusBar>
      <TaskBar>
        <svg width="1200" height="15" viewBox="0 0 1200 15" aria-hidden="true">
          <path d="M1127 0h66v15h-66z" fill="#6b6b6b" />
          <path d="M1195 0h5v15h-5z" fill="#545454" />
          <circle cx="188" cy="23" r="11" fill="#ea4335" />
          <circle cx="263" cy="18" r="5" fill="none" stroke="#8a8a8a" strokeWidth="2" />
          <circle cx="338" cy="23" r="11" fill="#8cc265" />
          <circle cx="488" cy="23" r="11" fill="#2f8fd0" />
          <rect x="547" y="12" width="32" height="9" rx="5" fill="#f8e458" />
          <path d="M549 15l4-3h4l-3 3z" fill="#46b4c8" />
          <rect x="622" y="12" width="33" height="9" rx="3" fill="#e6001f" />
          <circle cx="788" cy="19" r="7" fill="#000" />
          <path d="M850 12h26v3h-26z" fill="#fff" />
          <path d="M920 12h31v3h-31z" fill="#68217a" />
          <path d="M1003 14h26v1h-26z" fill="#4da3e0" />
          <circle cx="1089" cy="18" r="5" fill="#c96442" />
          <path d="M1145 12h36v3h-36z" fill="#352a86" />
          <path d="M1152 14h8M1165 14h6" stroke="#ddd" />
        </svg>
        <Clock>11:24</Clock>
      </TaskBar>
      <Watermark>CSDN @小张同学_Y</Watermark>
      <Meter>
        63%
        <svg width="84" height="84" viewBox="0 0 84 84" fill="none" aria-hidden="true">
          <path d="M56 12A33 33 0 1 0 42 75" stroke="url(#meter)" strokeWidth="6" />
        </svg>
      </Meter>
    </Window>
  );
}
